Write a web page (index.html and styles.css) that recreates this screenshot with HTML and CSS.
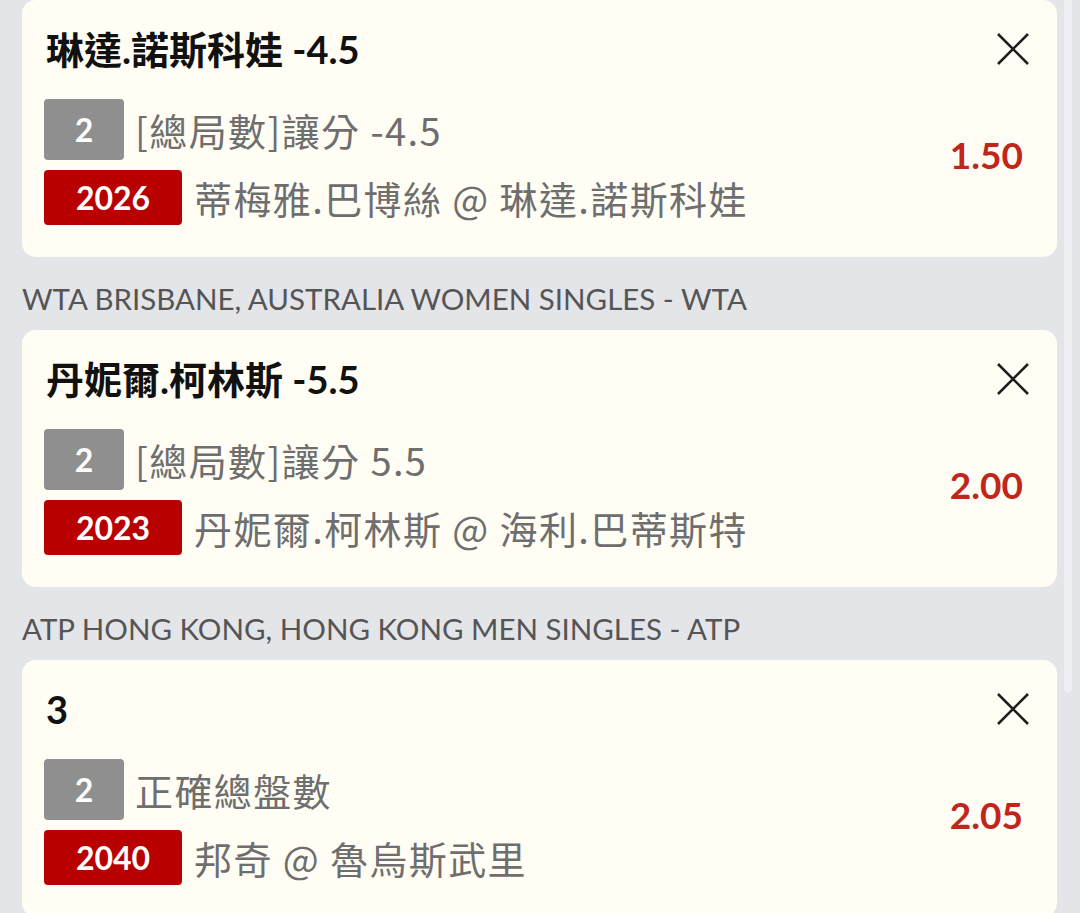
FILE: index.html
```html
<!DOCTYPE html>
<html lang="zh-Hant">
<head>
  <meta charset="UTF-8" />
  <meta name="viewport" content="width=device-width, initial-scale=1" />
  <title>投注單</title>
  <link rel="stylesheet" href="styles.css">
</head>
<body>

  <div class="slip-list">
    <!-- Bet 1 -->
    <div class="bet-card">
      <div class="bet-head">
        <h3 class="bet-title">琳達.諾斯科娃 -4.5</h3>
        <button class="close-btn" aria-label="移除">
          <svg viewBox="0 0 34 34" width="34" height="34"><path d="M2 2 L32 32 M32 2 L2 32" /></svg>
        </button>
      </div>
      <div class="bet-body">
        <div class="bet-info">
          <div class="info-row">
            <span class="badge badge-grey">2</span>
            <span class="market">[總局數]讓分 -4.5</span>
          </div>
          <div class="info-row">
            <span class="badge badge-red">2026</span>
            <span class="match">蒂梅雅.巴博絲 @ 琳達.諾斯科娃</span>
          </div>
        </div>
        <div class="odds">1.50</div>
      </div>
    </div>

    <div class="league">WTA BRISBANE, AUSTRALIA WOMEN SINGLES - WTA</div>

    <!-- Bet 2 -->
    <div class="bet-card">
      <div class="bet-head">
        <h3 class="bet-title">丹妮爾.柯林斯 -5.5</h3>
        <button class="close-btn" aria-label="移除">
          <svg viewBox="0 0 34 34" width="34" height="34"><path d="M2 2 L32 32 M32 2 L2 32" /></svg>
        </button>
      </div>
      <div class="bet-body">
        <div class="bet-info">
          <div class="info-row">
            <span class="badge badge-grey">2</span>
            <span class="market">[總局數]讓分 5.5</span>
          </div>
          <div class="info-row">
            <span class="badge badge-red">2023</span>
            <span class="match">丹妮爾.柯林斯 @ 海利.巴蒂斯特</span>
          </div>
        </div>
        <div class="odds">2.00</div>
      </div>
    </div>

    <div class="league">ATP HONG KONG, HONG KONG MEN SINGLES - ATP</div>

    <!-- Bet 3 -->
    <div class="bet-card">
      <div class="bet-head">
        <h3 class="bet-title">3</h3>
        <button class="close-btn" aria-label="移除">
          <svg viewBox="0 0 34 34" width="34" height="34"><path d="M2 2 L32 32 M32 2 L2 32" /></svg>
        </button>
      </div>
      <div class="bet-body">
        <div class="bet-info">
          <div class="info-row">
            <span class="badge badge-grey">2</span>
            <span class="market">正確總盤數</span>
          </div>
          <div class="info-row">
            <span class="badge badge-red">2040</span>
            <span class="match">邦奇 @ 魯烏斯武里</span>
          </div>
        </div>
        <div class="odds">2.05</div>
      </div>
    </div>
  </div>

  <div class="scroll-thumb"></div>

</body>
</html>
```

FILE: styles.css
```css
:root {
  --page-bg: #e4e5e9;
  --card-bg: #fffdf4;
  --title-color: #111;
  --text-grey: #6e6e6e;
  --badge-grey: #8f8f8f;
  --badge-red: #b80000;
  --odds-red: #c0261c;
}

body {
  margin: 0;
  background: var(--page-bg);
  font-family: Lato, "Noto Sans CJK TC", sans-serif;
  overflow: hidden;
}

.slip-list {
  padding: 0 23px 0 22px;
}

.bet-card {
  background: var(--card-bg);
  border-radius: 14px;
  padding: 28px 34px 32px 22px;
  height: 197px;
}

.bet-head {
  display: flex;
  align-items: center;
  justify-content: space-between;
  height: 42px;
}

.bet-title {
  margin: 0 0 0 2px;
  font-size: 38px;
  font-weight: 700;
  color: var(--title-color);
  line-height: 42px;
}

.close-btn {
  background: none;
  border: none;
  padding: 0;
  margin-right: -7px;
  width: 34px;
  height: 34px;
  cursor: pointer;
}

.close-btn svg path {
  stroke: #1e1e1e;
  stroke-width: 2.6;
  fill: none;
}

.bet-body {
  display: flex;
  align-items: center;
  justify-content: space-between;
  margin-top: 29px;
}

.bet-info {
  display: flex;
  flex-direction: column;
  gap: 10px;
}

.info-row {
  display: flex;
  align-items: center;
}

.badge {
  display: flex;
  align-items: center;
  justify-content: center;
  color: #fff;
  font-weight: 700;
  font-size: 32px;
  border-radius: 4px;
}

.badge-grey {
  background: var(--badge-grey);
  width: 80px;
  height: 61px;
}

.badge-red {
  background: var(--badge-red);
  width: 138px;
  height: 55px;
}

.market,
.match {
  color: var(--text-grey);
  font-size: 38px;
  line-height: 44px;
  font-family: "Noto Sans CJK TC", sans-serif;
  letter-spacing: 1.4px;
}

.market {
  margin-left: 11px;
}

.match {
  margin-left: 12px;
}

.odds {
  color: var(--odds-red);
  font-size: 37px;
  font-weight: 700;
  margin-bottom: 16px;
}

.league {
  color: #555;
  font-size: 29.5px;
  line-height: 36px;
  margin: 24px 0 13px;
}

.scroll-thumb {
  position: fixed;
  top: 0;
  right: 8px;
  width: 8px;
  height: 692px;
  background: #eef0f3;
  border-radius: 0 0 4px 4px;
}
```
